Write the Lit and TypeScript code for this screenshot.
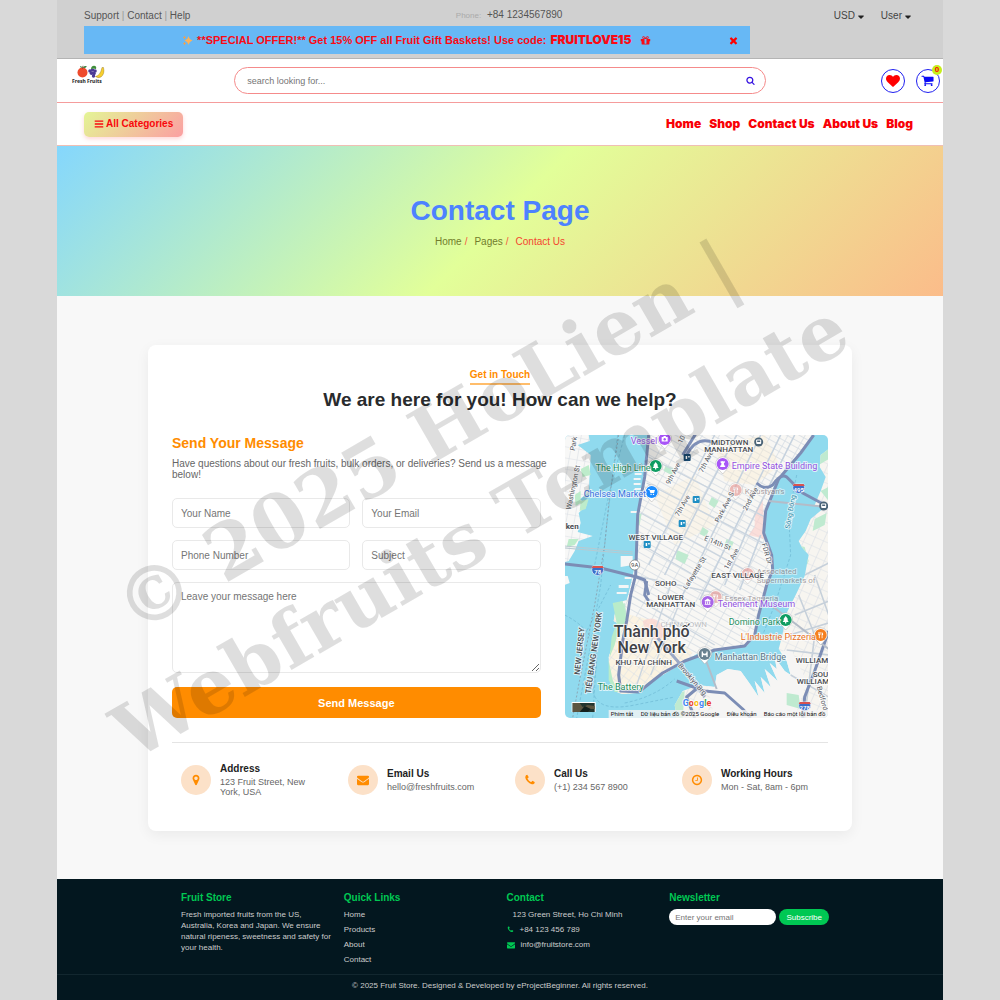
import { LitElement, html, css, svg } from "lit";
import { customElement } from "lit/decorators.js";

// Icon outlines share one 1792-unit square grid.
const icons: Record<string, string> = {
  bars: "M1664 1344v128q0 26-19 45t-45 19h-1408q-26 0-45-19t-19-45v-128q0-26 19-45t45-19h1408q26 0 45 19t19 45zm0-512v128q0 26-19 45t-45 19h-1408q-26 0-45-19t-19-45v-128q0-26 19-45t45-19h1408q26 0 45 19t19 45zm0-512v128q0 26-19 45t-45 19h-1408q-26 0-45-19t-19-45v-128q0-26 19-45t45-19h1408q26 0 45 19t19 45z",
  heart: "M896 1664q-26 0-44-18l-624-602q-10-8-27.5-26t-55.5-65.5-68-97.5-53.5-121-23.5-138q0-220 127-344t351-124q62 0 126.5 21.5t120 58 95.5 68.5 76 68q36-36 76-68t95.5-68.5 120-58 126.5-21.5q224 0 351 124t127 344q0 221-229 450l-623 600q-18 18-44 18z",
  search: "M1216 832q0-185-131.5-316.5t-316.5-131.5-316.5 131.5-131.5 316.5 131.5 316.5 316.5 131.5 316.5-131.5 131.5-316.5zm512 832q0 52-38 90t-90 38q-54 0-90-38l-343-342q-179 124-399 124-143 0-273.5-55.5t-225-150-150-225-55.5-273.5 55.5-273.5 150-225 225-150 273.5-55.5 273.5 55.5 225 150 150 225 55.5 273.5q0 220-124 399l343 343q37 37 37 90z",
  cart: "M704 1536q0 52-38 90t-90 38-90-38-38-90 38-90 90-38 90 38 38 90zm896 0q0 52-38 90t-90 38-90-38-38-90 38-90 90-38 90 38 38 90zm128-1088v512q0 24-16.5 42.5t-40.5 21.5l-1044 122q13 60 13 70 0 16-24 64h920q26 0 45 19t19 45-19 45-45 19h-1024q-26 0-45-19t-19-45q0-11 8-31.5t16-36 21.5-40 15.5-29.5l-177-823h-204q-26 0-45-19t-19-45 19-45 45-19h256q16 0 28.5 6.5t19.5 15.5 13 24.5 8 26 5.5 29.5 4.5 26h1201q26 0 45 19t19 45z",
  phone: "M1600 1240q0 27-10 70.5t-21 68.5q-21 50-122 106-94 51-186 51-27 0-53-3.5t-57.5-12.5-47-14.5-55.5-20.5-49-18q-98-35-175-83-127-79-264-216t-216-264q-48-77-83-175-3-9-18-49t-20.5-55.5-14.5-47-12.5-57.5-3.5-53q0-92 51-186 56-101 106-122 25-11 68.5-21t70.5-10q14 0 21 3 18 6 53 76 11 19 30 54t35 63.5 31 53.5q3 4 17.5 25t21.5 35.5 7 28.5q0 20-28.5 50t-62 55-62 53-28.5 46q0 9 5 22.5t8.5 20.5 14 24 11.5 19q76 137 174 235t235 174q2 1 19 11.5t24 14 20.5 8.5 22.5 5q18 0 46-28.5t53-62 55-62 50-28.5q14 0 28.5 7t35.5 21.5 25 17.5q25 15 53.5 31t63.5 35 54 30q70 35 76 53 3 7 3 21z",
  envelope: "M1792 710v794q0 66-47 113t-113 47h-1472q-66 0-113-47t-47-113v-794q44 49 101 87 362 246 497 345 57 42 92.5 65.5t94.5 48 110 24.5h2q51 0 110-24.5t94.5-48 92.5-65.5q170-123 498-345 57-39 100-87zm0-294q0 79-49 151t-122 123q-376 261-468 325-10 7-42.5 31t-54 38.5-52 32.5-57.5 27-50 9h-2q-23 0-50-9t-57.5-27-52-32.5-54-38.5-42.5-31q-91-64-262-182.5t-205-142.5q-62-42-117-115.5t-55-136.5q0-78 41.5-130t118.5-52h1472q65 0 112.5 47t47.5 113z",
  marker: "M1152 640q0-106-75-181t-181-75-181 75-75 181 75 181 181 75 181-75 75-181zm256 0q0 109-33 179l-364 774q-16 33-47.5 52t-67.5 19-67.5-19-46.5-52l-365-774q-33-70-33-179 0-212 150-362t362-150 362 150 150 362z",
  clock: "M1024 544v448q0 14-9 23t-23 9h-320q-14 0-23-9t-9-23v-64q0-14 9-23t23-9h224v-352q0-14 9-23t23-9h64q14 0 23 9t9 23zm416 352q0-148-73-273t-198-198-273-73-273 73-198 198-73 273 73 273 198 198 273 73 273-73 198-198 73-273zm224 0q0 209-103 385.5t-279.5 279.5-385.5 103-385.5-103-279.5-279.5-103-385.5 103-385.5 279.5-279.5 385.5-103 385.5 103 279.5 279.5 103 385.5z",
  times: "M1490 1322q0 40-28 68l-136 136q-28 28-68 28t-68-28l-294-294-294 294q-28 28-68 28t-68-28l-136-136q-28-28-28-68t28-68l294-294-294-294q-28-28-28-68t28-68l136-136q28-28 68-28t68 28l294 294 294-294q28-28 68-28t68 28l136 136q28 28 28 68t-28 68l-294 294 294 294q28 28 28 68z",
  caret: "M1408 704q0 26-19 45l-448 448q-19 19-45 19t-45-19l-448-448q-19-19-19-45t19-45 45-19h896q26 0 45 19t19 45z",
  gift: "M1056 1356v-716h-320v716q0 25 18 38.5t46 13.5h192q28 0 46-13.5t18-38.5zm-456-844h195l-126-161q-26-31-69-31-40 0-68 28t-28 68 28 68 68 28zm688-96q0-40-28-68t-68-28q-43 0-69 31l-125 161h194q40 0 68-28t28-68zm376 256v320q0 14-9 23t-23 9h-96v416q0 40-28 68t-68 28h-1088q-40 0-68-28t-28-68v-416h-96q-14 0-23-9t-9-23v-320q0-14 9-23t23-9h440q-93 0-158.5-65.5t-65.5-158.5 65.5-158.5 158.5-65.5q107 0 168 77l128 165 128-165q61-77 168-77 93 0 158.5 65.5t65.5 158.5-65.5 158.5-158.5 65.5h440q14 0 23 9t9 23z",
};

const icon = (name: string, size: number) => html`
  <svg class="icon" width=${size} height=${size} viewBox="0 0 1792 1792" aria-hidden="true">
    <path fill="currentColor" d=${icons[name]}></path>
  </svg>`;

interface MapLabel {
  text: string;
  x: number;
  y: number;
  size: number;
  color: string;
  turn?: number;
  weight?: number;
  anchor?: string;
  faint?: number;
}

const DARK = "#4a4d52";
const ROAD = "#55585e";
const PURPLE = "#9352e0";
const GREEN = "#1f8f5f";

const mapLabels: MapLabel[] = [
  { text: "CHINATOWN", x: 119, y: 192, size: 8, color: "#8b8e93", anchor: "middle", faint: 0.5 },
  { text: "Kalustyan's", x: 180, y: 59, size: 8, color: "#8a7d80", faint: 0.7 },
  { text: "Associated", x: 192, y: 139, size: 8, color: "#8a7d80", faint: 0.7 },
  { text: "Supermarkets of", x: 192, y: 148, size: 8, color: "#8a7d80", faint: 0.7 },
  { text: "Essex Taqueria", x: 160, y: 166, size: 8, color: "#8a7d80", faint: 0.7 },
  { text: "2nd Ave", x: 182, y: 76, size: 7, color: ROAD, turn: -62 },
  { text: "Park Ave S", x: 154, y: 88, size: 7, color: ROAD, turn: -62 },
  { text: "7th Ave", x: 138, y: 38, size: 7, color: ROAD, turn: -62 },
  { text: "9th Ave", x: 105, y: 50, size: 7, color: ROAD, turn: -62 },
  { text: "7th Ave", x: 114, y: 82, size: 7, color: ROAD, turn: -60 },
  { text: "10", x: 117, y: 9, size: 7, color: ROAD, turn: -62 },
  { text: "1st Ave", x: 163, y: 135, size: 7, color: ROAD, turn: -60 },
  { text: "E 14th St", x: 139, y: 105, size: 7, color: ROAD, turn: 22 },
  { text: "FDR Dr", x: 197, y: 109, size: 7, color: ROAD, turn: 74 },
  { text: "Lafayette St", x: 122, y: 155, size: 7, color: ROAD, turn: -58 },
  { text: "Washington St", x: 6, y: 75, size: 7, color: ROAD, turn: -78 },
  { text: "Park", x: 10, y: 16, size: 7, color: ROAD, turn: -80 },
  { text: "Brooklyn Brg", x: 113, y: 231, size: 7, color: ROAD, turn: 49 },
  { text: "Bedford", x: 252, y: 252, size: 7, color: ROAD, turn: 74 },
  { text: "Sông Đông", x: 225, y: 94, size: 7, color: "#2f8ba8", turn: -80 },
  { text: "NEW JERSEY", x: 15, y: 240, size: 8, color: DARK, turn: -84, weight: 500 },
  { text: "TIỂU BANG NEW YORK", x: 26, y: 259, size: 8, color: DARK, turn: -82, weight: 500 },
  { text: "MIDTOWN", x: 165, y: 10, size: 8, color: DARK, weight: 500, anchor: "middle" },
  { text: "MANHATTAN", x: 164, y: 17, size: 8, color: DARK, weight: 500, anchor: "middle" },
  { text: "WEST VILLAGE", x: 91, y: 105, size: 8, color: DARK, weight: 500, anchor: "middle" },
  { text: "EAST VILLAGE", x: 173, y: 143, size: 8, color: DARK, weight: 500, anchor: "middle" },
  { text: "SOHO", x: 101, y: 151, size: 8, color: DARK, weight: 500, anchor: "middle" },
  { text: "LOWER", x: 106, y: 165, size: 8, color: DARK, weight: 500, anchor: "middle" },
  { text: "MANHATTAN", x: 106, y: 172, size: 8, color: DARK, weight: 500, anchor: "middle" },
  { text: "KHU TÀI CHÍNH", x: 79, y: 230, size: 8, color: DARK, weight: 500, anchor: "middle" },
  { text: "WILLIAM", x: 231, y: 228, size: 8, color: DARK, weight: 500 },
  { text: "SOU", x: 248, y: 242, size: 8, color: DARK, weight: 500 },
  { text: "WILLIAM", x: 232, y: 249, size: 8, color: DARK, weight: 500 },
  { text: "ken", x: 1, y: 94, size: 8, color: DARK, weight: 700 },
  { text: "Vessel", x: 66, y: 9, size: 9, color: PURPLE },
  { text: "The High Line", x: 31, y: 36, size: 9, color: GREEN },
  { text: "Chelsea Market", x: 19, y: 62, size: 9, color: "#3a72e0" },
  { text: "Empire State Building", x: 167, y: 34, size: 9, color: PURPLE },
  { text: "Tenement Museum", x: 153, y: 172, size: 9, color: PURPLE },
  { text: "Domino Park", x: 164, y: 190, size: 9, color: GREEN },
  { text: "L'Industrie Pizzeria", x: 176, y: 205, size: 9, color: "#e8711c" },
  { text: "Manhattan Bridge", x: 150, y: 225, size: 9, color: "#5d7485" },
  { text: "The Battery", x: 33, y: 255, size: 9, color: GREEN },
  { text: "Thành phố", x: 87, y: 202, size: 16, color: "#3e4146", weight: 500, anchor: "middle" },
  { text: "New York", x: 87, y: 218, size: 16, color: "#3e4146", weight: 500, anchor: "middle" },
];

const pinGlyphs: Record<string, string> = {
  camera: "M-3 -2h1.500l.6 -1h1.800l.6 1H3v4.500h-6zM0 -1a1.300 1.300 0 1 0 .01 0z",
  tree: "M0 -4L2.500 -.5H1.500L3 2H.6V3.500H-.6V2H-3L-1.500 -.5H-2.500z",
  cart: "M-3.500 -3h1.400l.4 1H3.300l-.9 3H-1.300L-2.400 -2.200H-3.500zM-1.200 1.800h1.200v1.200h-1.200zM1.200 1.800h1.200v1.200h-1.200z",
  tower: "M-2 -3h1v.8h.5V-3H.5v.8H1V-3h1v2H1.200L1.600 1.500H2.500V3h-5V1.500h.9L-1.200 -1H-2z",
  museum: "M0 -3.500L3 -1.500V-.8H-3v-.7zM-2.500 -.4h1V2h-1zM-.5 -.4h1V2h-1zM1.500 -.4h1V2h-1zM-3 2.300h6v.8h-6z",
  fork: "M-2.500 -3h.5v2h.4v-2h.5v2h.4v-2h.5v2.500L-1 .2V3.200h-.8V.2L-2.500 -.5zM1 -3q1.500 .5 1.500 3H1.800V3.200H1z",
  bridge: "M-3 -2.500h1.300v1.500Q0 .3 1.700 -1v-1.500H3V3H1.700V1.300h-3.400V3H-3z",
};

const pins = [
  { x: 171, y: 55, color: "#e9a19d", glyph: "fork", faint: 0.7 },
  { x: 183, y: 139, color: "#e9a19d", glyph: "fork", faint: 0.7 },
  { x: 151, y: 162, color: "#e9a19d", glyph: "fork", faint: 0.7 },
  { x: 100, y: 4, color: "#a855f7", glyph: "camera" },
  { x: 91, y: 31, color: "#0f9d62", glyph: "tree" },
  { x: 87, y: 57, color: "#1a8cff", glyph: "cart" },
  { x: 158, y: 29, color: "#a855f7", glyph: "tower" },
  { x: 143, y: 167, color: "#a865e8", glyph: "museum" },
  { x: 221, y: 185, color: "#0f9d62", glyph: "tree" },
  { x: 256, y: 200, color: "#f57f20", glyph: "fork" },
  { x: 140, y: 219, color: "#69808f", glyph: "bridge" },
];

const MANHATTAN =
  "M84 0L81 20 79 42 77 62 74 80 72 100 71 125 68 141 64 158 62 165 52 168 50 180 49 186 56 190 50 205 44 222 45 244 50 256 57 259 72 258 84 247 98 240 116 229 132 219 160 214 182 211 189 203 193 188 197 170 203 150 207 141 208 119 201 102 199 82 204 66 210 49 225 32 239 16 249 0Z";
const BROOKLYN =
  "M264 14L256 20 255 32 261 42 256 56 250 70 258 74 246 84 241 96 234 106 237 112 244 120 240 141 232 158 222 178 217 203 214 214 222 226 226 240 220 236 210 222 212 234 205 228 213 246 200 234 206 252 196 242 200 258 190 246 194 262 186 250 176 236 163 234 152 240 150 252 134 250 118 256 110 270 112 283 264 283Z";
const HOBOKEN =
  "M0 0H24L25 6 13 10 26 20 25 40 24 58 15 64 22 70 14 78 16 88 13 97 28 101 14 106 10 116 4 126 0 127Z";

@customElement("city-map")
export class CityMap extends LitElement {
  static styles = css`
    :host {
      display: block;
      overflow: hidden;
      border-radius: 5px;
    }
    .map {
      display: block;
      width: 100%;
      height: 100%;
      font-family: Roboto, "Liberation Sans", sans-serif;
    }
    .halo {
      paint-order: stroke;
      stroke: rgba(255, 255, 255, 0.7);
      stroke-width: 2px;
      stroke-linejoin: round;
    }
  `;

  private label(l: MapLabel) {
    return svg`<text class="halo" transform="translate(${l.x} ${l.y}) rotate(${l.turn ?? 0})"
      font-size=${l.size} font-weight=${l.weight ?? 400} fill=${l.color}
      opacity=${l.faint ?? 1} text-anchor=${l.anchor ?? "start"}>${l.text}</text>`;
  }

  private pin(p: { x: number; y: number; color: string; glyph: string; faint?: number }) {
    return svg`<g transform="translate(${p.x} ${p.y})" opacity=${p.faint ?? 1}>
      <path d="M0 10L-4 5.500A7 7 0 1 1 4 5.500Z" fill="#fff" stroke="#999" stroke-width=".4"></path>
      <circle r="6" fill=${p.color}></circle>
      <path d=${pinGlyphs[p.glyph]} fill="#fff"></path>
    </g>`;
  }

  private shield(x: number, y: number, n: string) {
    return svg`<g transform="translate(${x} ${y})">
      <path d="M-5 -4H5Q7 0 5 3Q3 5 0 5.500Q-3 5 -5 3Q-7 0 -5 -4Z" fill="#3c6ec9" stroke="#fff" stroke-width=".6"></path>
      <path d="M-5 -4H5L6 -2H-6Z" fill="#d9534f"></path>
      <text y="4" font-size="6" font-weight="700" fill="#fff" text-anchor="middle">${n}</text>
    </g>`;
  }

  render() {
    return html`
      <svg class="map" viewBox="0 0 264 283" preserveAspectRatio="xMidYMid slice" role="img" aria-label="New York">
        <defs>
          <pattern id="grid" width="15" height="6" patternUnits="userSpaceOnUse" patternTransform="rotate(29)">
            <rect width="15" height="6" fill="#f8f7f4"></rect>
            <path d="M0 0H15M0 0V6" stroke="#d5dce3" stroke-width="1.400"></path>
          </pattern>
          <pattern id="east" width="9" height="9" patternUnits="userSpaceOnUse" patternTransform="rotate(24)">
            <rect width="9" height="9" fill="#f7f5f0"></rect>
            <path d="M0 0H9M0 0V9" stroke="#d9dfe6" stroke-width="1.200"></path>
          </pattern>
          <pattern id="south" width="7" height="8" patternUnits="userSpaceOnUse" patternTransform="rotate(36)">
            <rect width="7" height="8" fill="#fbf3e2"></rect>
            <path d="M0 0H7M0 0V8" stroke="#d9dfe6"></path>
          </pattern>
          <pattern id="west" width="8" height="11" patternUnits="userSpaceOnUse" patternTransform="rotate(10)">
            <rect width="8" height="11" fill="#f8f8f7"></rect>
            <path d="M0 0H8M0 0V11" stroke="#dadfe6" stroke-width="1.200"></path>
          </pattern>
          <clipPath id="isle"><path d=${MANHATTAN}></path></clipPath>
          <clipPath id="shore"><path d=${BROOKLYN}></path></clipPath>
        </defs>
        <rect width="264" height="283" fill="#90daee"></rect>
        <path d=${HOBOKEN} fill="url(#west)"></path>
        <path d="M0 141H3L5 148 0 150Z" fill="#f8f8f7"></path>
        <path d="M24 30l-8 4 2 8 8-2zM16 66l8-2-3 10-6 2zM10 60l6-4 0 12-5 3zM4 104l10 0-4 6-8 2z" fill="#bdeccb"></path>
        <path d=${MANHATTAN} fill="url(#grid)"></path>
        <g clip-path="url(#isle)">
          <path d="M46 175L90 186 128 218 80 262 40 262Z" fill="url(#south)"></path>
          <path d="M150 10L200 0 215 30 190 50 160 46Z" fill="#fbeccb" opacity=".35"></path>
          <path d="M90 60L130 40 150 90 110 110Z" fill="#fbeccb" opacity=".25"></path>
          <path d="M198 64l-8 14 0 14-6 8 16 4zM78 186q10-6 18 2l6 10-8 8-12-6z" fill="#fbd3cf" opacity=".7"></path>
          <path d="M101 30l9 4-3 6-8-4zM147 62l7 4-4 7-6-4zM162 104l7 3-3 8-7-3zM112 115l12 5-4 9-9-5zM138 92l6 4-3 6-6-3zM50 172l10-4 3 18-9 6zM72 80l5-2-2 12-5 1zM69 124l-8 0 0 7 8 0z" fill="#bfead0"></path>
          <path d="M84 130L98 100 150 0M100 140L140 60 172 0M118 160L196 0M135 165L216 0M160 150L182 96 230 0M175 155L196 100" fill="none" stroke="#c6d2de" stroke-width="1.600"></path>
          <path d="M76 78L204 148M82 48L202 110M84 22L204 84M78 110L190 176M72 141L196 168M66 160L150 210M106 150L70 256M118 160L86 240" fill="none" stroke="#cbd5df" stroke-width="1.400"></path>
          <path d="M118 20L134 -6M122 20Q132 0 150 8" fill="none" stroke="#7f90b8" stroke-width="3"></path>
        </g>
        <path d="M48 168l10-2 4 20-8 8-4 16-5 12 2-20 5-14zM44 225l4 20 6 12-4 0-6-12z" fill="#b9ecc9"></path>
        <g fill="#f4f6f6">
          <path d="M70 38h7v2h-7zM69 43h7v2h-7zM69 48h7v2h-7zM70 53h7v2h-7zM69 60h7v2h-7zM66 76h7v2h-7zM56 121l12 0 0 9-12 2zM60 142h7v2h-7zM54 150h10v3H54zM52 157h10v2H52z"></path>
        </g>
        <path d=${BROOKLYN} fill="url(#east)"></path>
        <g clip-path="url(#shore)">
          <path d="M140 240L226 214 242 246 230 283H150Z" fill="#f6f5f4"></path>
          <path d="M222 258l12 2 2 14-14-4zM255 14l9-4v14l-10 6zM256 56l8-4v14zM250 84l12-6-2 12-12 6zM232 110l8 2 4 14-6 14zM106 262l14-6-2 27h-12z" fill="#bfead0"></path>
          <path d="M230 180L264 166M225 200L264 188M222 215L264 220M234 160L250 200 240 283M250 140L264 180M240 140L264 128M226 240L264 262" fill="none" stroke="#c6d0da" stroke-width="1.600"></path>
        </g>
        <g fill="none" stroke="#6fb9d4" stroke-width=".7" stroke-dasharray="3 2">
          <path d="M53 0L48 40 42 90 36 150 26 210 12 283M60 0L44 60 30 130M34 190L28 283M0 180Q40 200 30 240T70 270L110 262M60 268Q90 262 110 244M232 40L224 80 226 120 210 170 196 205M20 200L46 150"></path>
        </g>
        <path d="M54 0L45 60 40 110 30 170 14 250 8 283" fill="none" stroke="#8a9aa8" stroke-width=".8" stroke-dasharray="2 2"></path>
        <path d="M0 111L68 117M0 113L68 119" stroke="#b9c9d0" stroke-width="1"></path>
        <g fill="none" stroke="#7c8db5" stroke-width="3" stroke-linejoin="round">
          <path d="M84 0L80 42 73 80 71 140 66 160 62 186 58 206 54 240 56 256 74 257 98 238 120 226 150 215 180 211 190 200 194 180 202 150 208 135 207 120 199 98 201 76 214 44 236 18 249 0"></path>
          <path d="M0 129L36 133 72 142 80 145 84 160"></path>
          <path d="M192 48Q200 56 208 50 216 38 222 42L238 58 264 72"></path>
          <path d="M93 203L118 232 140 262" stroke="#9aa8c6"></path>
          <path d="M112 246L140 256 160 258 178 274 186 283M264 196L250 236 240 262 238 283M130 283L122 262 134 252"></path>
          <path d="M82 146L80 160 84 166"></path>
        </g>
        <path d="M140 222L152 254M204 66L262 72M206 170L264 214" fill="none" stroke="#b4bcc8" stroke-width="2"></path>
        ${[[119, 19], [128, 61], [114, 85], [79, 106]].map(([x, y]) => svg`
          <g transform="translate(${x} ${y})">
            <rect width="7" height="7" rx="1" fill=${y < 30 ? "#17476e" : "#1f8fc4"}></rect>
            <path d="M2 2h1.500v3H2zM4.500 2H6v1.500H4.500z" fill="#fff"></path>
          </g>`)}
        ${[[194, 7], [259, 71]].map(([x, y]) => svg`
          <g transform="translate(${x} ${y})">
            <circle r="4.500" fill="#4a6376"></circle>
            <rect x="-2.500" y="-2.500" width="5" height="4.500" rx="1" fill="#fff"></rect>
            <path d="M-1.500 -1.500h3V0h-3z" fill="#4a6376"></path>
          </g>`)}
        <circle cx="70" cy="130" r="5" fill="#fff" stroke="#777" stroke-width=".7"></circle>
        <text x="70" y="132" font-size="6" fill="#444" text-anchor="middle">9A</text>
        ${this.shield(33, 135, "78")} ${this.shield(234, 53, "495")} ${this.shield(240, 271, "278")}
        ${pins.map((p) => this.pin(p))} ${mapLabels.map((l) => this.label(l))}
        <g>
          <rect x="7" y="267" width="24" height="10" fill="#fff"></rect>
          <rect x="8" y="268" width="22" height="9" fill="#23352f"></rect>
          <path d="M8 268h7l3 4 5-2 7 1v3l-9 0-4 3H8z" fill="#5b5540"></path>
          <path d="M20 271l6 3-3 3h-8z" fill="#14201d"></path>
        </g>
        <text class="halo" x="118" y="271" font-size="9" font-weight="700">
          <tspan fill="#4285f4">G</tspan><tspan fill="#ea4335">o</tspan><tspan fill="#fbbc05">o</tspan><tspan fill="#4285f4">g</tspan><tspan fill="#34a853">l</tspan><tspan fill="#ea4335">e</tspan>
        </text>
        <rect x="44" y="275" width="220" height="8" fill="#f5f5f5" opacity=".8"></rect>
        <g font-size="6" fill="#111">
          <text x="46" y="281">Phím tắt</text>
          <text x="76" y="281">Dữ liệu bản đồ ©2025 Google</text>
          <text x="162" y="281">Điều khoản</text>
          <text x="199" y="281">Báo cáo một lỗi bản đồ</text>
        </g>
      </svg>
    `;
  }
}

@customElement("app-root")
export class AppRoot extends LitElement {
  static styles = css`
    :host {
      display: block;
      min-height: 100vh;
      background: #d9d9d9;
      font-family: "Liberation Sans", Arial, sans-serif;
      font-size: 10px;
      line-height: 12px;
      color: #555;
    }
    * {
      box-sizing: border-box;
    }
    a {
      color: inherit;
      text-decoration: none;
    }
    h1, h2, h3, h4, p, ul {
      margin: 0;
      padding: 0;
    }
    ul {
      list-style: none;
    }
    button, input, textarea, select {
      font: inherit;
      color: inherit;
      margin: 0;
      border: 0;
      background: none;
      padding: 0;
    }
    button {
      cursor: pointer;
    }
    .icon {
      display: block;
      flex: none;
    }
    .page {
      position: relative;
      display: flex;
      flex-direction: column;
      min-height: 100vh;
      margin: 0 57px;
      background: #f8f8f8;
      overflow: hidden;
    }

    .topbar {
      padding: 9px 27px 4px;
      background: #d0d0d0;
      border-bottom: 1px solid #b4b4b4;
    }
    .topline {
      display: flex;
      justify-content: space-between;
      align-items: center;
      margin-bottom: 4px;
    }
    .divider {
      color: #999;
    }
    .phone {
      padding-right: 6px;
    }
    .phone-label {
      margin-right: 3px;
      font-size: 8px;
      color: #aaa;
    }
    .menus {
      display: flex;
      gap: 15px;
      padding-right: 3px;
      color: #444;
    }
    .menu {
      display: flex;
      align-items: center;
      gap: 1px;
      line-height: 12px;
    }
    .menu select {
      appearance: none;
      field-sizing: content;
      height: 12px;
    }
    .menu .icon {
      margin-top: 3px;
      color: #222;
    }
    .offer {
      display: grid;
      grid-template-columns: 1fr auto 1fr;
      align-items: center;
      width: 80%;
      height: 28px;
      background: #67b8f5;
      color: #fa0a14;
      font-size: 11px;
      font-weight: 700;
    }
    .offer-text {
      grid-column: 2;
      display: flex;
      align-items: center;
      gap: 4px;
      white-space: nowrap;
    }
    .code {
      margin-right: 5px;
      font-family: Inter, "Liberation Sans", sans-serif;
      font-size: 12px;
      font-weight: 900;
    }
    .close {
      justify-self: end;
      padding-right: 11px;
      color: red;
    }

    .header {
      display: grid;
      grid-template-columns: 20% 60% 20%;
      align-items: center;
      height: 44px;
      background: #fff;
      border-bottom: 1px solid #f59c9c;
    }
    .logo {
      justify-self: start;
      align-self: start;
      padding: 6px 0 0 14px;
    }
    .logo svg {
      display: block;
    }
    .search {
      display: flex;
      align-items: center;
      height: 27px;
      padding: 0 10px 0 12px;
      border: 1px solid #f58b8b;
      border-radius: 14px;
      font-size: 9px;
    }
    .search input {
      flex: 1;
      min-width: 0;
      outline: none;
    }
    .search button {
      color: #3512e0;
    }
    ::placeholder {
      color: #757575;
      opacity: 1;
    }
    .actions {
      display: flex;
      justify-content: flex-end;
      gap: 11px;
      padding-right: 3px;
    }
    .round {
      position: relative;
      display: grid;
      place-items: center;
      width: 24px;
      height: 24px;
      border: 1px solid #2020f0;
      border-radius: 50%;
      color: #0a0af5;
    }
    .like {
      color: red;
    }
    .badge {
      position: absolute;
      top: -5px;
      right: -3px;
      width: 10px;
      height: 10px;
      border-radius: 50%;
      background: #c6ee1c;
      color: red;
      font-size: 8px;
      line-height: 10px;
      font-weight: 700;
      text-align: center;
    }

    .nav {
      display: flex;
      align-items: center;
      justify-content: space-between;
      height: 43px;
      padding: 0 30px 0 27px;
      background: #fff;
      border-bottom: 1px solid #f0bfb4;
    }
    .categories {
      display: flex;
      align-items: center;
      gap: 2px;
      height: 25px;
      padding: 0 10px;
      border-radius: 5px;
      background: linear-gradient(135deg, #e4f595, #fb9fa2);
      box-shadow: 0 2px 4px rgba(255, 120, 120, 0.3);
      color: #f8080c;
      font-weight: 700;
    }
    .links {
      display: flex;
      gap: 8px;
      font-family: Inter, "Liberation Sans", sans-serif;
      font-size: 12px;
      font-weight: 900;
      color: #f80006;
    }

    .hero {
      padding: 48px 24px;
      background: linear-gradient(135deg, #85d7fd, #e2ff99 50%, #fbbc8a);
      text-align: center;
    }
    .hero h1 {
      margin-bottom: 8px;
      color: #4d82ff;
      font-size: 28px;
      line-height: 34px;
    }
    .crumbs {
      display: flex;
      justify-content: center;
      color: #717c2c;
    }
    .crumbs .slash {
      margin: 0 7px 0 3px;
      color: #f4553c;
    }
    .crumbs .here {
      color: #f4452f;
    }

    .main {
      padding: 49px 91px 48px;
    }
    .card {
      padding: 24px;
      border-radius: 8px;
      background: #fff;
      box-shadow: 0 4px 14px rgba(0, 0, 0, 0.06);
    }
    .intro {
      margin-bottom: 23px;
      text-align: center;
    }
    .touch {
      display: inline-block;
      padding-bottom: 3px;
      border-bottom: 2px solid #ffbd6b;
      color: #ff8c00;
      font-weight: 700;
      line-height: 10px;
    }
    .intro h2 {
      margin-top: 3px;
      color: #292b2d;
      font-size: 19px;
      line-height: 24px;
    }
    .columns {
      display: grid;
      grid-template-columns: 7fr 5fr;
      gap: 24px;
    }
    .message h3 {
      margin-bottom: 6px;
      color: #ff8c00;
      font-size: 14px;
      line-height: 17px;
    }
    .message p {
      margin: 0 -8px 18px 0;
      line-height: 11px;
      color: #666;
    }
    .form {
      display: grid;
      grid-template-columns: 1fr 1fr;
      gap: 12px;
    }
    .field {
      min-width: 0;
      width: 100%;
      height: 30px;
      padding: 0 8px;
      border: 1px solid #e9e9e9;
      border-radius: 5px;
      background: #fff;
    }
    .area {
      grid-column: 1 / -1;
      display: block;
      height: 91px;
      padding: 8px;
      resize: vertical;
    }
    .send {
      grid-column: 1 / -1;
      height: 31px;
      margin-top: 2px;
      border-radius: 5px;
      background: #ff8c00;
      color: #fff;
      font-size: 11px;
      font-weight: 700;
    }
    .facts {
      display: grid;
      grid-template-columns: repeat(4, 1fr);
      gap: 12px;
      margin-top: 24px;
      padding: 20px 0 10px;
      border-top: 1px solid #e4e4e4;
    }
    .fact {
      display: flex;
      align-items: center;
      gap: 9px;
      padding: 0 9px;
      font-size: 9px;
      line-height: 10px;
      color: #666;
    }
    .fact h4 {
      margin-bottom: 2px;
      color: #222;
      font-size: 10px;
      line-height: 12px;
    }
    .dot {
      flex: none;
      display: grid;
      place-items: center;
      width: 30px;
      height: 30px;
      border-radius: 50%;
      background: #fce1c8;
      color: #ff8c00;
    }

    .footer {
      flex: 1;
      padding-top: 13px;
      background: #03171f;
      color: #ccc;
      font-size: 8px;
      line-height: 11px;
    }
    .footer-columns {
      display: grid;
      grid-template-columns: repeat(4, minmax(0, 1fr));
      gap: 3px;
      padding: 0 114px 9px 124px;
    }
    .footer h4 {
      margin-bottom: 5px;
      color: #00c853;
      font-size: 10px;
      line-height: 12px;
    }
    .about {
      padding-right: 6px;
    }
    .stack {
      display: grid;
      gap: 4px;
    }
    .stack li {
      display: flex;
      align-items: center;
      gap: 6px;
      white-space: nowrap;
    }
    .stack .icon {
      color: #00c853;
    }
    .indent {
      padding-left: 6px;
    }
    .subscribe {
      display: flex;
      gap: 3px;
    }
    .subscribe input {
      flex: 1;
      min-width: 0;
      height: 16px;
      padding: 0 6px;
      border-radius: 8px;
      background: #fff;
      color: #333;
    }
    .subscribe button {
      height: 16px;
      padding: 0 7px;
      border-radius: 8px;
      background: #00c853;
      color: #fff;
    }
    .copyright {
      padding: 5px 0 9px;
      border-top: 1px solid #12272f;
      text-align: center;
    }

    .watermark {
      position: absolute;
      inset: 0;
      display: grid;
      place-content: center;
      padding: 0 92px 32px 0;
      pointer-events: none;
      color: rgba(0, 0, 0, 0.13);
      font-family: "DejaVu Serif", serif;
      font-size: 76px;
      line-height: 108px;
      font-weight: 700;
      text-align: center;
      white-space: nowrap;
    }
    .watermark span {
      display: block;
      transform: rotate(-30deg);
    }
  `;

  private fact(name: string, title: string, text: string) {
    return html`
      <div class="fact">
        <span class="dot">${icon(name, 12)}</span>
        <div>
          <h4>${title}</h4>
          <p>${text}</p>
        </div>
      </div>`;
  }

  private logo() {
    return html`
      <svg width="36" height="20" viewBox="0 0 36 20" role="img" aria-label="Fresh Fruits">
        <circle cx="11.500" cy="7.500" r="5" fill="#ee4a2c"></circle>
        <path d="M11 3Q11 1 9 1Q9 2.500 11 3ZM12 3Q13 0 16 1.500Q14 3.500 12 3Z" fill="#2f7a33"></path>
        <path d="M11.500 3.500L12 .8" stroke="#5b3a1e" stroke-width=".8"></path>
        <g fill="#4b3a94">
          <circle cx="19" cy="6" r="1.800"></circle><circle cx="21.500" cy="5" r="1.800"></circle>
          <circle cx="24" cy="6" r="1.800"></circle><circle cx="20.500" cy="8.200" r="1.800"></circle>
          <circle cx="23" cy="8.500" r="1.800"></circle><circle cx="22.500" cy="11" r="1.700"></circle>
        </g>
        <path d="M20 4Q20 1 23 .8Q26 1 25 4Q22 3 20 4Z" fill="#3f8f3a"></path>
        <path d="M31 2.500L32.500 2.500Q34 9 30 12Q27 13.500 24.500 11.500Q29.500 10.500 31 2.500Z" fill="#f7cf2d" stroke="#8a6d16" stroke-width=".4"></path>
        <text x="1" y="18" font-family="Noto Sans, sans-serif" font-size="5" font-weight="800" fill="#333">Fresh Fruits</text>
      </svg>`;
  }

  render() {
    return html`
      <div class="page">
        <div class="topbar">
          <div class="topline">
            <div>
              <a href="#">Support</a> <span class="divider">|</span>
              <a href="#">Contact</a> <span class="divider">|</span>
              <a href="#">Help</a>
            </div>
            <div class="phone"><span class="phone-label">Phone:</span> <a href="tel:+841234567890">+84 1234567890</a></div>
            <div class="menus">
              <label class="menu">
                <select aria-label="Currency"><option>USD</option></select>${icon("caret", 10)}
              </label>
              <button class="menu" type="button">User ${icon("caret", 10)}</button>
            </div>
          </div>
          <div class="offer">
            <div class="offer-text">
              <svg class="icon" width="11" height="11" viewBox="0 0 22 22" aria-hidden="true">
                <path d="M13 2Q14.500 9 21 11Q14.500 13 13 20Q11.500 13 5 11Q11.500 9 13 2Z" fill="#ffb257"></path>
                <path d="M5 1Q5.500 4 8 5Q5.500 6 5 9Q4.500 6 2 5Q4.500 4 5 1ZM5 13Q5.500 16 8 17Q5.500 18 5 21Q4.500 18 2 17Q4.500 16 5 13Z" fill="#f5a04a"></path>
              </svg>
              <span>**SPECIAL OFFER!** Get 15% OFF all Fruit Gift Baskets! Use code:</span>
              <span class="code">FRUITLOVE15</span>
              ${icon("gift", 11)}
            </div>
            <button class="close" type="button" aria-label="Close">${icon("times", 11)}</button>
          </div>
        </div>

        <header class="header">
          <a class="logo" href="#">${this.logo()}</a>
          <form class="search">
            <input type="search" placeholder="search looking for..." aria-label="search looking for..." />
            <button type="button" aria-label="Search">${icon("search", 9)}</button>
          </form>
          <div class="actions">
            <a class="round like" href="#" aria-label="Wishlist">${icon("heart", 14)}</a>
            <a class="round" href="#" aria-label="Cart">${icon("cart", 13)}<span class="badge">0</span></a>
          </div>
        </header>

        <nav class="nav">
          <button class="categories" type="button">${icon("bars", 10)} All Categories</button>
          <div class="links">
            ${["Home", "Shop", "Contact Us", "About Us", "Blog"].map((t) => html`<a href="#">${t}</a>`)}
          </div>
        </nav>

        <section class="hero">
          <h1>Contact Page</h1>
          <div class="crumbs">
            <a href="#">Home</a><span class="slash">/</span>
            <a href="#">Pages</a><span class="slash">/</span>
            <span class="here">Contact Us</span>
          </div>
        </section>

        <main class="main">
          <div class="card">
            <div class="intro">
              <span class="touch">Get in Touch</span>
              <h2>We are here for you! How can we help?</h2>
            </div>
            <div class="columns">
              <div class="message">
                <h3>Send Your Message</h3>
                <p>Have questions about our fresh fruits, bulk orders, or deliveries? Send us a message below!</p>
                <form class="form">
                  <input class="field" type="text" placeholder="Your Name" aria-label="Your Name" />
                  <input class="field" type="email" placeholder="Your Email" aria-label="Your Email" />
                  <input class="field" type="tel" placeholder="Phone Number" aria-label="Phone Number" />
                  <input class="field" type="text" placeholder="Subject" aria-label="Subject" />
                  <textarea class="field area" placeholder="Leave your message here" aria-label="Leave your message here"></textarea>
                  <button class="send" type="button">Send Message</button>
                </form>
              </div>
              <city-map></city-map>
            </div>
            <div class="facts">
              ${this.fact("marker", "Address", "123 Fruit Street, New York, USA")}
              ${this.fact("envelope", "Email Us", "hello@freshfruits.com")}
              ${this.fact("phone", "Call Us", "(+1) 234 567 8900")}
              ${this.fact("clock", "Working Hours", "Mon - Sat, 8am - 6pm")}
            </div>
          </div>
        </main>

        <footer class="footer">
          <div class="footer-columns">
            <div>
              <h4>Fruit Store</h4>
              <p class="about">Fresh imported fruits from the US, Australia, Korea and Japan. We ensure natural ripeness, sweetness and safety for your health.</p>
            </div>
            <div>
              <h4>Quick Links</h4>
              <ul class="stack">
                ${["Home", "Products", "About", "Contact"].map((t) => html`<li><a href="#">${t}</a></li>`)}
              </ul>
            </div>
            <div>
              <h4>Contact</h4>
              <ul class="stack">
                <li class="indent">123 Green Street, Ho Chi Minh</li>
                <li>${icon("phone", 7)} +84 123 456 789</li>
                <li>${icon("envelope", 8)} info@fruitstore.com</li>
              </ul>
            </div>
            <div>
              <h4>Newsletter</h4>
              <form class="subscribe">
                <input type="email" placeholder="Enter your email" aria-label="Enter your email" />
                <button type="button">Subscribe</button>
              </form>
            </div>
          </div>
          <div class="copyright">© 2025 Fruit Store. Designed &amp; Developed by eProjectBeginner. All rights reserved.</div>
        </footer>

        <div class="watermark" aria-hidden="true">
          <span>© 2025 HoLien |<br />Webfruits Template</span>
        </div>
      </div>
    `;
  }
}
